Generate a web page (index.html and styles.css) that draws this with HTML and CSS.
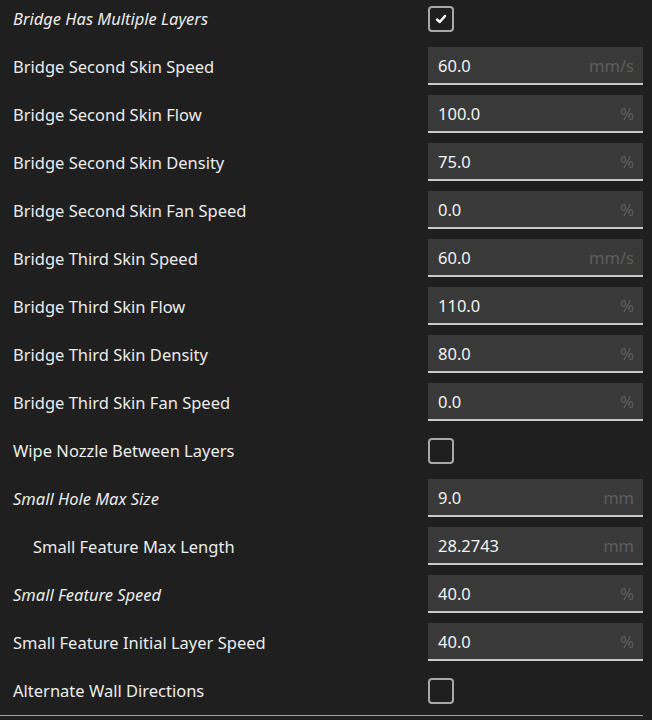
FILE: index.html
```html
<!DOCTYPE html>
<html>
<head>
<meta charset="utf-8">
<link rel="stylesheet" href="styles.css">
</head>
<body>
<div class="panel">
  <div class="row"><span class="label italic">Bridge Has Multiple Layers</span><span class="check checked"><svg viewBox="0 0 12 12" width="12" height="12"><path d="M2 6.5 L4.8 9 L10 3" fill="none" stroke="#fff" stroke-width="2.4" stroke-linecap="round" stroke-linejoin="round"/></svg></span></div>
  <div class="row"><span class="label">Bridge Second Skin Speed</span><span class="field"><span class="val">60.0</span><span class="unit">mm/s</span></span></div>
  <div class="row"><span class="label">Bridge Second Skin Flow</span><span class="field"><span class="val">100.0</span><span class="unit">%</span></span></div>
  <div class="row"><span class="label">Bridge Second Skin Density</span><span class="field"><span class="val">75.0</span><span class="unit">%</span></span></div>
  <div class="row"><span class="label">Bridge Second Skin Fan Speed</span><span class="field"><span class="val">0.0</span><span class="unit">%</span></span></div>
  <div class="row"><span class="label">Bridge Third Skin Speed</span><span class="field"><span class="val">60.0</span><span class="unit">mm/s</span></span></div>
  <div class="row"><span class="label">Bridge Third Skin Flow</span><span class="field"><span class="val">110.0</span><span class="unit">%</span></span></div>
  <div class="row"><span class="label">Bridge Third Skin Density</span><span class="field"><span class="val">80.0</span><span class="unit">%</span></span></div>
  <div class="row"><span class="label">Bridge Third Skin Fan Speed</span><span class="field"><span class="val">0.0</span><span class="unit">%</span></span></div>
  <div class="row"><span class="label">Wipe Nozzle Between Layers</span><span class="check"></span></div>
  <div class="row"><span class="label italic">Small Hole Max Size</span><span class="field"><span class="val">9.0</span><span class="unit">mm</span></span></div>
  <div class="row"><span class="label indent">Small Feature Max Length</span><span class="field"><span class="val">28.2743</span><span class="unit">mm</span></span></div>
  <div class="row"><span class="label italic">Small Feature Speed</span><span class="field"><span class="val">40.0</span><span class="unit">%</span></span></div>
  <div class="row"><span class="label">Small Feature Initial Layer Speed</span><span class="field"><span class="val">40.0</span><span class="unit">%</span></span></div>
  <div class="row"><span class="label">Alternate Wall Directions</span><span class="check"></span></div>
  <div class="divider"></div>
</div>
</body>
</html>
```
FILE: styles.css
```css
html, body {
  margin: 0;
  padding: 0;
  background: #1f1f1f;
}
body {
  width: 652px;
  height: 720px;
  overflow: hidden;
  font-family: "Noto Sans", "Open Sans", sans-serif;
  font-size: 16.5px;
  color: #ececec;
}
.panel {
  display: flex;
  flex-direction: column;
  margin-top: -5px;
}
.row {
  height: 48px;
  display: flex;
  align-items: center;
  justify-content: space-between;
  padding-left: 13px;
  padding-right: 9px;
}
.label {
  white-space: nowrap;
  margin-bottom: 2px;
}
.italic {
  font-style: italic;
}
.indent {
  padding-left: 20px;
}
.field {
  width: 215px;
  height: 38px;
  box-sizing: border-box;
  background: #393939;
  border-bottom: 2px solid #c8c8c8;
  display: flex;
  align-items: center;
  justify-content: space-between;
  padding: 0 9px 0 10px;
  margin-bottom: 2px;
}
.val {
  color: #f2f2f2;
}
.unit {
  color: #5e5e5e;
}
.check {
  width: 26px;
  height: 26px;
  box-sizing: border-box;
  border: 2px solid #a8a8a8;
  border-radius: 4px;
  margin-right: 189px;
  display: flex;
  align-items: center;
  justify-content: center;
}
.divider {
  height: 1px;
  background: #a0a0a0;
  width: 643px;
}
```
